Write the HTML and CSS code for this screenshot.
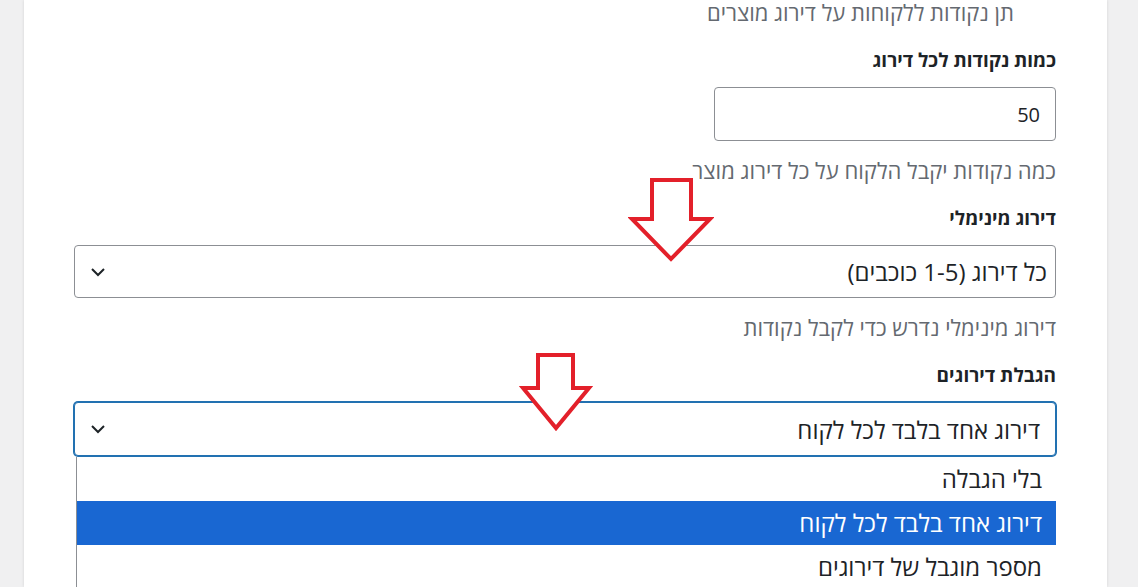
FILE: index.html
```html
<!DOCTYPE html>
<html lang="he" dir="rtl">
<head>
  <meta charset="UTF-8">
  <link rel="stylesheet" href="styles.css">
</head>
<body>
  <div class="page">
    <div class="panel">
      <div class="form">
        <p class="description first">תן נקודות ללקוחות על דירוג מוצרים</p>

        <div class="field">
          <label for="pointsPerReview">כמות נקודות לכל דירוג</label>
          <input type="text" id="pointsPerReview" class="text-input" value="50">
          <p class="description">כמה נקודות יקבל הלקוח על כל דירוג מוצר</p>
        </div>

        <div class="field">
          <label for="minRating">דירוג מינימלי</label>
          <div class="select-box">
            <span class="select-value">כל דירוג (1-5 כוכבים)</span>
            <svg class="chevron" viewBox="0 0 16 10" width="16" height="10">
              <path d="M2 2 L8 8 L14 2" fill="none" stroke="#1d2327" stroke-width="2"/>
            </svg>
          </div>
          <p class="description">דירוג מינימלי נדרש כדי לקבל נקודות</p>
        </div>

        <div class="field">
          <label for="reviewLimit">הגבלת דירוגים</label>
          <div class="select-wrap">
            <div class="select-box focused">
              <span class="select-value">דירוג אחד בלבד לכל לקוח</span>
              <svg class="chevron" viewBox="0 0 16 10" width="16" height="10">
                <path d="M2 2 L8 8 L14 2" fill="none" stroke="#1d2327" stroke-width="2"/>
              </svg>
            </div>
            <ul class="options">
              <li>בלי הגבלה</li>
              <li class="selected">דירוג אחד בלבד לכל לקוח</li>
              <li>מספר מוגבל של דירוגים</li>
            </ul>
          </div>
        </div>
      </div>
    </div>

    <!-- annotation arrows -->
    <svg class="arrow arrow-one" width="86" height="88" viewBox="0 0 86 88">
      <polygon points="24,4 63,4 63,43 82,43 43,83 4,43 24,43" fill="#fff" stroke="#e3202a" stroke-width="4" stroke-linejoin="miter"/>
    </svg>
    <svg class="arrow arrow-two" width="74" height="82" viewBox="0 0 74 82">
      <polygon points="19,4 54,4 54,37 70,37 37,77 4,37 19,37" fill="#fff" stroke="#e3202a" stroke-width="4" stroke-linejoin="miter"/>
    </svg>
  </div>
</body>
</html>
```

FILE: styles.css
```css
html, body {
  margin: 0;
  padding: 0;
}

body {
  background-color: #f0f0f1;
  font-family: "Open Sans", "Liberation Sans", sans-serif;
  color: #1d2327;
  overflow: hidden;
}

.page {
  position: relative;
  width: 1138px;
  height: 587px;
  direction: ltr;
}

.panel {
  margin-left: 24px;
  width: 1083px;
  height: 587px;
  background-color: #fff;
  box-shadow: 0 0 3px rgba(0,0,0,0.12);
}

.form {
  direction: rtl;
  padding: 0 51px;
  display: flex;
  flex-direction: column;
}

.description {
  margin: 0;
  font-size: 22px;
  line-height: 28px;
  color: #646970;
}

.description.first {
  line-height: 24px;
  margin-bottom: 2px;
  padding-right: 42px;
}

.field {
  display: flex;
  flex-direction: column;
  align-items: stretch;
  margin-top: 21px;
}

label {
  font-size: 19px;
  font-weight: 700;
  line-height: 26px;
  margin-bottom: 14px;
}

.text-input {
  align-self: flex-start;
  width: 342px;
  height: 54px;
  box-sizing: border-box;
  padding: 0 15px;
  border: 1px solid #8c8f94;
  border-radius: 4px;
  font-family: inherit;
  font-size: 20px;
  color: #1d2327;
  text-align: right;
  margin-bottom: 15px;
}

.select-box {
  display: flex;
  align-items: center;
  justify-content: space-between;
  height: 53px;
  box-sizing: border-box;
  margin-left: -1px;
  padding: 0 8px 0 15px;
  border: 1px solid #8c8f94;
  border-radius: 4px;
  font-size: 24px;
  background-color: #fff;
}

.field > .select-box {
  margin-bottom: 15px;
}

.select-box.focused {
  height: 54px;
  border-color: #2271b1;
  box-shadow: 0 0 0 1px #2271b1;
  padding-right: 15px;
}

.select-wrap {
  position: relative;
}

.options {
  position: absolute;
  top: 55px;
  left: 1px;
  right: 0;
  margin: 0;
  padding: 0;
  list-style: none;
  background-color: #fff;
  border-left: 1px solid #8c8f94;
  font-size: 24px;
}

.options li {
  height: 44px;
  line-height: 44px;
  padding-right: 14px;
}

.options li.selected {
  background-color: #1967d2;
  color: #fff;
}

.arrow {
  position: absolute;
}

.arrow-one {
  left: 628px;
  top: 176px;
}

.arrow-two {
  left: 519px;
  top: 351px;
}
```
